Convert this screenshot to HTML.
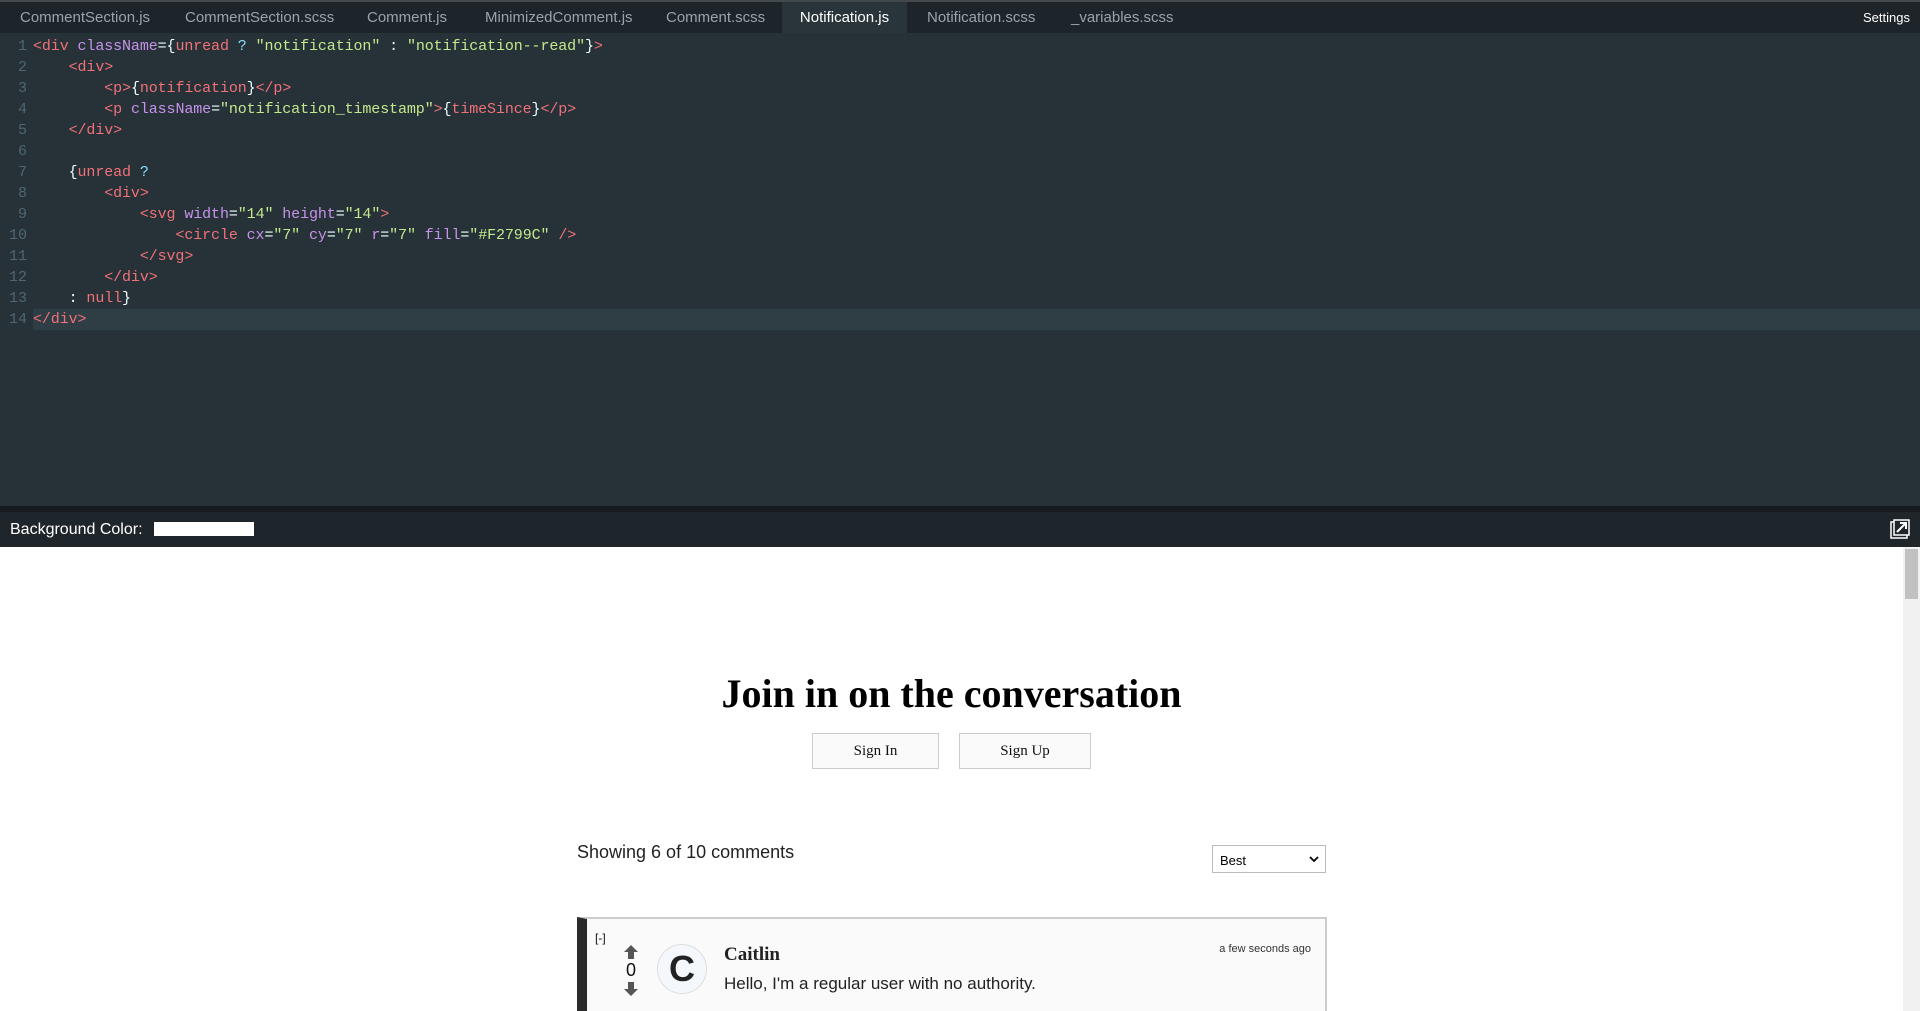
<!DOCTYPE html>
<html><head><meta charset="utf-8"><style>
*{margin:0;padding:0;box-sizing:border-box}
html{overflow:hidden;height:1011px}
body{width:1920px;height:1011px;overflow:hidden;background:#fff;font-family:"Liberation Sans",Arial,sans-serif;position:relative}
#tabs{position:absolute;left:0;top:0;width:1920px;height:33px;background:#1e252a;border-top:2px solid #44494d}
.tab{position:absolute;top:0;height:31px;line-height:31px;font-size:15px;color:#9aa3a9;white-space:nowrap}
.tab.act{background:#2a343b;color:#fff}
#set{position:absolute;right:10px;top:0;line-height:31px;font-size:13px;color:#fff}
#ed{position:absolute;left:0;top:33px;width:1920px;height:473px;background:#263238;font-family:"Liberation Mono","DejaVu Sans Mono",monospace;font-size:15px}
.ln{position:absolute;left:0;height:21px;line-height:21px;width:1920px;white-space:pre;color:#eeffff;letter-spacing:-0.1px}
.ln .n{display:inline-block;width:33px;text-align:right;padding-right:6px;color:#4f6672;letter-spacing:0}
.hl{background:#2f3d44}
.hl .n{background:#263238}
.t{color:#f07178}.a{color:#c792ea}.s{color:#c3e88d}.q{color:#89ddff}.v{color:#f07178}
#sep{position:absolute;left:0;top:506px;width:1920px;height:6px;background:#151b1e}
#bar{position:absolute;left:0;top:512px;width:1920px;height:35px;background:#1f262b;color:#fff;font-size:16px}
#bar span{position:absolute;left:10px;top:9px}
#box{position:absolute;left:154px;top:10px;width:100px;height:14px;background:#fff}
#ico{position:absolute;left:1890px;top:7px}
#sb{position:absolute;left:1903px;top:547px;width:17px;height:464px;background:#f1f1f1}
#th{position:absolute;left:2px;top:2px;width:13px;height:50px;background:#c1c1c1}
h1{position:absolute;left:0;width:1903px;top:670px;text-align:center;font-family:"Liberation Serif",serif;font-weight:bold;font-size:40px;color:#000}
.btn{position:absolute;top:733px;height:36px;border:1px solid #ccc;background:#fafafa;font-family:"Liberation Serif",serif;font-size:15px;text-align:center;line-height:34px;color:#111}
#show{position:absolute;left:577px;top:842px;font-size:18px;color:#222}
#sel{position:absolute;left:1212px;top:845px;width:114px;height:28px;border:1px solid #bbb;background:#fff;font-size:13px;padding:7px 0 0 7px}
#card{position:absolute;left:577px;top:917px;width:750px;height:94px;background:#fafafa;border:2px solid #ccc;border-bottom:0;border-left:10px solid #2b2b2b}
</style></head><body>
<div id="tabs">
<div class="tab" style="left:20px">CommentSection.js</div>
<div class="tab" style="left:185px">CommentSection.scss</div>
<div class="tab" style="left:367px">Comment.js</div>
<div class="tab" style="left:485px">MinimizedComment.js</div>
<div class="tab" style="left:666px">Comment.scss</div>
<div class="tab act" style="left:782px;width:125px;text-align:center">Notification.js</div>
<div class="tab" style="left:927px">Notification.scss</div>
<div class="tab" style="left:1071px">_variables.scss</div>
<div id="set">Settings</div>
</div>
<div id="ed">
<div class="ln" style="top:3px"><span class="n">1</span><span class="t">&lt;div</span> <span class="a">className</span>={<span class="v">unread</span> <span class="q">?</span> <span class="s">"notification"</span> : <span class="s">"notification--read"</span>}<span class="t">&gt;</span></div>
<div class="ln" style="top:24px"><span class="n">2</span>    <span class="t">&lt;div&gt;</span></div>
<div class="ln" style="top:45px"><span class="n">3</span>        <span class="t">&lt;p&gt;</span>{<span class="v">notification</span>}<span class="t">&lt;/p&gt;</span></div>
<div class="ln" style="top:66px"><span class="n">4</span>        <span class="t">&lt;p</span> <span class="a">className</span>=<span class="s">"notification_timestamp"</span><span class="t">&gt;</span>{<span class="v">timeSince</span>}<span class="t">&lt;/p&gt;</span></div>
<div class="ln" style="top:87px"><span class="n">5</span>    <span class="t">&lt;/div&gt;</span></div>
<div class="ln" style="top:108px"><span class="n">6</span></div>
<div class="ln" style="top:129px"><span class="n">7</span>    {<span class="v">unread</span> <span class="q">?</span></div>
<div class="ln" style="top:150px"><span class="n">8</span>        <span class="t">&lt;div&gt;</span></div>
<div class="ln" style="top:171px"><span class="n">9</span>            <span class="t">&lt;svg</span> <span class="a">width</span>=<span class="s">"14"</span> <span class="a">height</span>=<span class="s">"14"</span><span class="t">&gt;</span></div>
<div class="ln" style="top:192px"><span class="n">10</span>                <span class="t">&lt;circle</span> <span class="a">cx</span>=<span class="s">"7"</span> <span class="a">cy</span>=<span class="s">"7"</span> <span class="a">r</span>=<span class="s">"7"</span> <span class="a">fill</span>=<span class="s">"#F2799C"</span> <span class="t">/&gt;</span></div>
<div class="ln" style="top:213px"><span class="n">11</span>            <span class="t">&lt;/svg&gt;</span></div>
<div class="ln" style="top:234px"><span class="n">12</span>        <span class="t">&lt;/div&gt;</span></div>
<div class="ln" style="top:255px"><span class="n">13</span>    : <span class="v">null</span>}</div>
<div class="ln hl" style="top:276px"><span class="n">14</span><span class="t">&lt;/div&gt;</span></div>
</div>
<div id="sep"></div>
<div id="bar"><span>Background Color:</span><div id="box"></div>
<svg id="ico" width="20" height="20" viewBox="0 0 20 20"><rect x="1" y="3" width="16" height="16" fill="none" stroke="#fff" stroke-width="1.5"/><rect x="4" y="1" width="15" height="15" fill="#1f262b" stroke="#fff" stroke-width="1.5"/><path d="M7 13 L16 4 M10 4 H16 V10" fill="none" stroke="#fff" stroke-width="2"/></svg>
</div>
<div id="sb"><div id="th"></div></div>
<h1>Join in on the conversation</h1>
<div class="btn" style="left:812px;width:127px">Sign In</div>
<div class="btn" style="left:959px;width:132px">Sign Up</div>
<div id="show">Showing 6 of 10 comments</div>
<div id="sel">Best<svg style="position:absolute;right:6px;top:10px" width="10" height="7" viewBox="0 0 10 7"><path d="M1 1 L5 5 L9 1" fill="none" stroke="#000" stroke-width="1.8"/></svg></div>
<div id="card">
<div style="position:absolute;left:8px;top:12px;font-size:12px;color:#111">[-]</div>
<svg style="position:absolute;left:36px;top:26px" width="16" height="52" viewBox="0 0 16 52"><path d="M8 0 L15 7 H11 V14 H5 V7 H1 Z" fill="#555"/><path d="M8 51 L15 44 H11 V37 H5 V44 H1 Z" fill="#555"/></svg>
<div style="position:absolute;left:36px;top:41px;width:16px;text-align:center;font-size:18px;color:#111">0</div>
<div style="position:absolute;left:70px;top:25px;width:50px;height:50px;border-radius:50%;border:1px solid #ddd;background:#f4f8fc;text-align:center;line-height:48px;font-size:36px;font-weight:bold;color:#222">C</div>
<div style="position:absolute;left:137px;top:25px;font-family:'Liberation Serif',serif;font-weight:bold;font-size:19px;color:#222">Caitlin</div>
<div style="position:absolute;left:137px;top:55px;font-size:17px;color:#222">Hello, I'm a regular user with no authority.</div>
<div style="position:absolute;right:14px;top:24px;font-size:11px;color:#333">a few seconds ago</div>
</div>
</body></html>
